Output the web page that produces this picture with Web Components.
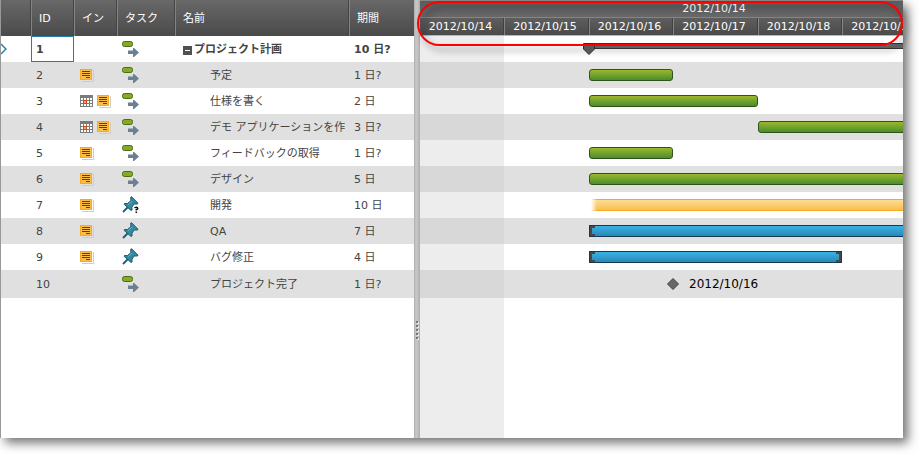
<!DOCTYPE html>
<html lang="ja">
<head>
<meta charset="utf-8">
<title>プロジェクト計画</title>
<style>
html, body { height: 100%; }
body {
  margin: 0;
  background: #fff;
  color: #444;
  font: 11px/16px "DejaVu Sans", "Noto Sans CJK JP", sans-serif;
}
</style>
</head>
<body>
<gantt-app></gantt-app>
<script>
const TASKS = [
  { id: 1, marks: [], kind: 'auto', name: 'プロジェクト計画', time: '10 日?', bar: 'summary', from: 3, to: 8, parent: true },
  { id: 2, marks: ['note'], kind: 'auto', name: '予定', time: '1 日?', bar: 'auto', from: 3, to: 4 },
  { id: 3, marks: ['cal', 'note'], kind: 'auto', name: '仕様を書く', time: '2 日', bar: 'auto', from: 3, to: 5 },
  { id: 4, marks: ['cal', 'note'], kind: 'auto', name: 'デモ アプリケーションを作成', time: '3 日?', bar: 'auto', from: 5, to: 8 },
  { id: 5, marks: ['note'], kind: 'auto', name: 'フィードバックの取得', time: '1 日?', bar: 'auto', from: 3, to: 4 },
  { id: 6, marks: ['note'], kind: 'auto', name: 'デザイン', time: '5 日', bar: 'auto', from: 3, to: 8 },
  { id: 7, marks: ['note'], kind: 'pinq', name: '開発', time: '10 日', bar: 'open', from: 3, to: 8 },
  { id: 8, marks: ['note'], kind: 'pin', name: 'QA', time: '7 日', bar: 'manual', from: 3, to: 8 },
  { id: 9, marks: ['note'], kind: 'pin', name: 'バグ修正', time: '4 日', bar: 'manual', from: 3, to: 6 },
  { id: 10, marks: [], kind: 'auto', name: 'プロジェクト完了', time: '1 日?', bar: 'milestone', from: 4, to: 7, label: '2012/10/16' }
];
const DAYS = ['2012/10/14', '2012/10/15', '2012/10/16', '2012/10/17', '2012/10/18', '2012/10/19', '2012/10/20'];

const PIN = `<path d="M1 16 L6.5 10.5" stroke="#1c5d72" stroke-width="1.8" fill="none"/>
  <path d="M2.5 7.5 H5.5 L8.8 4.8 V1 L9.6 .8 L16 7.2 L15.6 8 H12 L10 11.2 V14 L9 14.4 L2.2 8.4Z" fill="#3589a2" stroke="#1c5d72" stroke-width="1"/>
  <path d="M6 8.6 L10 5.2" stroke="#6fb3c6" stroke-width="1" fill="none"/>`;
const ICONS = {
  note: [14, 14, `<path d="M2 13.5 H13.5 V2" fill="none" stroke="#d2cdc0" stroke-width="1"/>
    <rect x=".5" y="1.5" width="11" height="10" fill="#fabd48" stroke="#f9a91d"/>
    <path d="M2 3.5H10M2 5.5H10M2 7.5H10M6 9.5H10" stroke="#604010" stroke-width="1"/>`],
  cal: [14, 14, `<rect x="0" y="1" width="13" height="12" fill="#7c7c7c"/>
    <path d="M1 4h2v2H1zM4 4h2v2H4zM7 4h2v2H7zM10 4h2v2h-2zM1 7h2v2H1zM7 7h2v2H7zM10 7h2v2h-2zM1 10h2v2H1zM4 10h2v2H4zM7 10h2v2H7zM10 10h2v2h-2z" fill="#fff"/>
    <rect x="3.5" y="6.5" width="3" height="3" fill="#ffa070" stroke="#d8480c"/>`],
  auto: [18, 16, `<rect x=".5" y=".5" width="10" height="5" rx="2" fill="#86a928" stroke="#4b6d0c"/>
    <path d="M6 9.5h5V7h1l5 4.5-5 4.5h-1v-3H6z" fill="#6b8090"/>`],
  pin: [18, 18, PIN],
  pinq: [18, 18, PIN + `<path d="M12.5 12.2Q12.7 11 14.3 11Q16 11 16 12.3Q16 13.2 14.4 13.7V14.6" fill="none" stroke="#fff" stroke-width="4"/>
    <path d="M12.8 12.2Q12.9 11.2 14.3 11.2Q15.7 11.2 15.7 12.4Q15.7 13.2 14.3 13.7V14.6M14.3 15.4V17" fill="none" stroke="#111" stroke-width="1.6"/>`]
};

customElements.define('task-icon', class extends HTMLElement {
  connectedCallback() {
    const [w, h, art] = ICONS[this.getAttribute('name')];
    this.attachShadow({ mode: 'open' }).innerHTML = `
      <style>:host{display:block;flex:none} svg{display:block}</style>
      <svg width="${w}" height="${h}" viewBox="0 0 ${w} ${h}" aria-hidden="true">${art}</svg>`;
  }
});

customElements.define('task-grid', class extends HTMLElement {
  connectedCallback() {
    this.attachShadow({ mode: 'open' }).innerHTML = `
<style>
:host { display: block; overflow: hidden; background: #fff; }
table { width: 100%; table-layout: fixed; border-collapse: separate; border-spacing: 0; }
.c0 { width: 30px } .c1, .c2 { width: 43px } .c3 { width: 58px } .c4 { width: 174px }
th {
  box-sizing: border-box; height: 36px; padding: 2px 0 0 7px; text-align: left; font-weight: normal; color: #fff;
  background: linear-gradient(#686868, #4a4a4a);
  border-left: 1px solid #848484; border-right: 1px solid #444;
}
th:first-child { border-left: 0; }
th:last-child { border-right: 0; }
td { box-sizing: border-box; height: 26px; padding: 2px 0 0 5px; white-space: nowrap; overflow: hidden; }
tr:nth-child(even) td { background: #e0e0e0; }
tbody tr:last-child td { height: 28px; }
td:first-child { padding: 0; }
td.icons { padding: 0 0 0 6px; }
td.task { padding: 0 0 0 5px; }
td.name { padding: 2px 4px 0 35px; }
.clip { overflow: hidden; }
.parent td { font-weight: bold; }
.parent td.name { padding-left: 8px; }
.parent .clip { display: flex; align-items: center; gap: 2px; }
td.selected { border: 1px solid #2080a8; padding-left: 4px; }
.marks { display: flex; gap: 3px; }
.arrow { display: block; }
button { box-sizing: border-box; width: 9px; height: 9px; padding: 0; border: 0; background: #505050; display: grid; place-items: center; }
button::before { content: ""; width: 5px; height: 1px; background: #fff; }
</style>
<table>
<colgroup><col class="c0"><col class="c1"><col class="c2"><col class="c3"><col class="c4"><col></colgroup>
<thead><tr><th></th><th>ID</th><th>イン</th><th>タスク</th><th>名前</th><th>期間</th></tr></thead>
<tbody>${TASKS.map(t => `<tr class="${t.parent ? 'parent' : ''}">
<td>${t.parent ? '<svg class="arrow" width="6" height="12" viewBox="0 0 6 12"><path d="M0 1 L5 6 L0 11" fill="none" stroke="#2080a8" stroke-width="1.4"/></svg>' : ''}</td>
<td class="${t.parent ? 'selected' : ''}">${t.id}</td>
<td class="icons"><div class="marks">${t.marks.map(m => `<task-icon name="${m}"></task-icon>`).join('')}</div></td>
<td class="task"><task-icon name="${t.kind}"></task-icon></td>
<td class="name"><div class="clip">${t.parent ? '<button type="button" aria-label="折りたたむ"></button>' : ''}<span>${t.name}</span></div></td>
<td>${t.time}</td></tr>`).join('')}</tbody>
</table>`;
  }
});

customElements.define('pane-splitter', class extends HTMLElement {
  connectedCallback() {
    this.attachShadow({ mode: 'open' }).innerHTML = `
<style>
:host { display: flex; flex-direction: column; align-items: center; justify-content: flex-end; box-sizing: border-box;
  padding-bottom: 98px; background: linear-gradient(90deg, #aaa, #c8c8c8 30%, #c2c2c2 60%, #adadad); cursor: col-resize; }
svg { display: block; }
</style>
<svg width="4" height="20" viewBox="0 0 4 20"><path d="M2 2h2v2H2zM2 6h2v2H2zM2 10h2v2H2zM2 14h2v2H2zM2 18h2v2H2z" fill="#eee"/><path d="M1 1h2v2H1zM1 5h2v2H1zM1 9h2v2H1zM1 13h2v2H1zM1 17h2v2H1z" fill="#777"/></svg>`;
  }
});

customElements.define('gantt-bar', class extends HTMLElement {
  connectedCallback() {
    const kind = this.getAttribute('kind');
    const extra = {
      summary: '<svg class="cap" width="12" height="12" viewBox="0 0 12 12"><path d="M.5 .5h11v5.5l-5.5 5.5-5.5-5.5z" fill="#606060" stroke="#303030"/></svg>',
      manual: '<i></i><i class="end"></i>',
      milestone: '<svg width="12" height="12" viewBox="0 0 12 12"><path d="M6 .5L11.5 6 6 11.5.5 6z" fill="#686868" stroke="#404040"/></svg><slot></slot>'
    }[kind] || '';
    this.attachShadow({ mode: 'open' }).innerHTML = `
<style>
:host { display: flex; box-sizing: border-box; height: 12px; align-self: center; }
:host([kind=auto]) { border: 1px solid #2b551b; border-radius: 3px; background: linear-gradient(#9bb82c, #4c8c2c); }
:host([kind=open]) { border: solid #f5aa22; border-width: 1px 0; background: linear-gradient(#fddc94, #f9c050);
  -webkit-mask: linear-gradient(90deg, transparent 2px, #000 8px); mask: linear-gradient(90deg, transparent 2px, #000 8px); }
:host([kind=manual]) { justify-content: space-between; border: 1px solid #123a54; background: linear-gradient(#3ab2e4, #2a88b8); }
:host([kind=summary]) { height: 6px; margin-bottom: 6px; background: #686868; border: solid #383838; border-width: 1px 0; }
:host([kind=milestone]) { align-items: center; gap: 10px; color: #000; font-size: 12px; margin-left: -6px; }
.cap { flex: none; margin: -1px 0 0 -6px; }
i { box-sizing: border-box; width: 5px; height: 10px; border: 2px solid #484848; border-right: 0; }
i.end { border: 2px solid #484848; border-left: 0; }
</style>${extra}`;
  }
});

customElements.define('gantt-timeline', class extends HTMLElement {
  connectedCallback() {
    this.attachShadow({ mode: 'open' }).innerHTML = `
<style>
:host { display: flex; flex-direction: column; overflow: hidden; min-width: 0; }
.days, .row { display: grid; grid-template-columns: 84px 85px 84px 85px 84px 85px 84px; }
header { flex: none; color: #fff; }
.days { grid-template-rows: 18px 17px; border-bottom: 1px solid #b8b8b8; text-align: center; line-height: 18px; }
.week, .day { padding-right: 3px; }
.week { box-sizing: border-box; grid-column: 1 / -1; border-top: 1px solid #888; border-bottom: 1px solid #858585; background: linear-gradient(#5c5c5c, #686868);
  line-height: 16px; }
.day { background: linear-gradient(#5e5e5e, #4a4a4a); border-left: 1px solid #848484; border-right: 1px solid #404040; }
.day:nth-child(2) { border-left-color: #555; }
.body { flex: 1; background: linear-gradient(90deg, #ededed 84px, #fff 84px); }
.row { height: 26px; }
.row:nth-child(even) { background: linear-gradient(90deg, #d8d8d8 84px, #e0e0e0 84px); }
.row:last-child { height: 28px; }
</style>
<header><div class="days"><div class="week">2012/10/14</div>${DAYS.map(d => `<div class="day">${d}</div>`).join('')}</div></header>
<div class="body">${TASKS.map(t => `<div class="row"><gantt-bar kind="${t.bar}" style="grid-column:${t.from}/${t.to}">${t.label || ''}</gantt-bar></div>`).join('')}</div>`;
  }
});

customElements.define('gantt-app', class extends HTMLElement {
  connectedCallback() {
    this.attachShadow({ mode: 'open' }).innerHTML = `
<style>
:host { display: block; box-sizing: border-box; height: 100%; padding: 0 16px 16px 0; overflow: hidden; }
.frame { position: relative; box-sizing: border-box; display: grid; grid-template-columns: 413px 6px minmax(0, 1fr);
  height: 100%; border-left: 1px solid #999; box-shadow: 5px 5px 10px rgba(0, 0, 0, .55); background: #fff; }
.callout { position: absolute; box-sizing: border-box; left: 416px; right: 0; top: 1px; height: 45px;
  border: 2px solid #f00; border-radius: 23px; filter: drop-shadow(4px 5px 3px rgba(0, 0, 0, .4)); pointer-events: none; }
</style>
<div class="frame">
  <task-grid></task-grid><pane-splitter></pane-splitter><gantt-timeline></gantt-timeline>
  <div class="callout"></div>
</div>`;
  }
});
</script>
</body>
</html>
